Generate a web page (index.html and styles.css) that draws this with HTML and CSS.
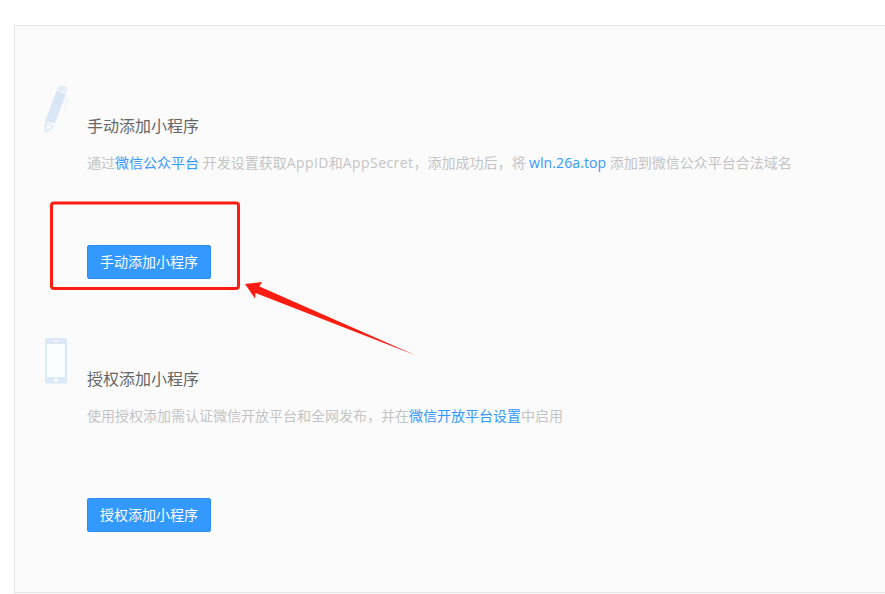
FILE: index.html
```html
<!DOCTYPE html>
<html lang="zh-CN">
<head>
<meta charset="utf-8">
<title>添加小程序</title>
<link rel="stylesheet" href="styles.css">
</head>
<body>
<main class="panel">
  <section class="method method-manual">
    <svg class="method-icon" width="24" height="48" viewBox="0 0 24 48" aria-hidden="true">
      <path d="M13.4 3.4C15 .6 18 -.2 20.4 .8C22.8 1.9 23.4 4.2 22.8 6.4L22.2 8.2L12.9 4.4Z" fill="#e3edf7"/>
      <path d="M12.7 5.2L22 9.2L11 38.3L1 36.7Z" fill="#d9e7f5"/>
      <path d="M23 12L23.8 12.3L20.4 26.6L19.6 26.2Z" fill="#e8eff8"/>
      <path d="M1 37L10.9 41.2L3.2 47.4C2 48 .6 47.4 .6 46.2Z" fill="#dfeaf6"/>
      <path d="M2.4 39.2L7.9 41.5L3 45.3Z" fill="#fbfbfb"/>
    </svg>
    <div class="method-body">
      <h2 class="method-title">手动添加小程序</h2>
      <p class="method-desc">通过<a class="link" href="#">微信公众平台</a> 开发设置获取<span class="latin">AppID</span>和<span class="latin">AppSecret</span>，添加成功后，将 <a class="link latin" href="#">wln.26a.top</a> 添加到微信公众平台合法域名</p>
      <button class="btn" type="button">手动添加小程序</button>
    </div>
  </section>
  <section class="method method-auth">
    <svg class="method-icon" width="24" height="46" viewBox="0 0 24 46" aria-hidden="true">
      <rect x="1" y="0" width="22" height="45.500" rx="2.500" fill="#dbe8f5"/>
      <rect x="3" y="6" width="18" height="33" fill="#fbfcfe"/>
      <rect x="9" y="2.500" width="6" height="1.500" rx=".75" fill="#fbfcfe"/>
      <circle cx="12" cy="42.300" r="1.700" fill="#fbfcfe"/>
    </svg>
    <div class="method-body">
      <h2 class="method-title">授权添加小程序</h2>
      <p class="method-desc">使用授权添加需认证微信开放平台和全网发布，并在<a class="link" href="#">微信开放平台设置</a>中启用</p>
      <button class="btn" type="button">授权添加小程序</button>
    </div>
  </section>
</main>
<svg class="annotation" width="885" height="594" viewBox="0 0 885 594" aria-hidden="true">
  <rect x="51.500" y="203" width="187" height="85.500" rx="2.500" fill="none" stroke="#fb1d12" stroke-width="3"/>
  <path d="M245 284L262 282L259.500 286.500L416 355.500L255.500 293L255 298.500Z" fill="#fb1d12"/>
</svg>
</body>
</html>
```
FILE: styles.css
```css
html, body {
  margin: 0;
  padding: 0;
  background: #fff;
  overflow: hidden;
}
body {
  width: 885px;
  height: 594px;
  padding-top: 25px;
  box-sizing: border-box;
  font-family: "Open Sans", "Noto Sans CJK SC", sans-serif;
}
.panel {
  margin-left: 14px;
  width: 900px;
  height: 568px;
  box-sizing: border-box;
  border: 1px solid #e6e6e6;
  background: #fbfbfb;
  padding: 59px 0 0 29px;
}
.method {
  display: flex;
  align-items: flex-start;
}
.method-manual { height: 253px; }
.method-auth { height: 254px; }
.method-icon {
  flex: none;
  margin-right: 19px;
}
.method-body { padding-top: 29px; }
.method-title {
  margin: 0;
  font-size: 16px;
  font-weight: 400;
  line-height: 24px;
  color: #666;
}
.method-desc {
  margin: 13px 0 0;
  font-size: 14px;
  line-height: 24px;
  color: #c4c4c4;
  white-space: nowrap;
}
.latin {
  letter-spacing: 0.42px;
}
.link {
  color: #3399ff;
  text-decoration: none;
}
.link.latin {
  letter-spacing: 0.1px;
}
.btn {
  display: block;
  margin-top: 70px;
  width: 124px;
  height: 34px;
  padding: 0;
  border: 1px solid #2a90f5;
  border-radius: 2px;
  background: #3399ff;
  color: #fff;
  font: inherit;
  font-size: 14px;
  line-height: 32px;
  text-align: center;
}
.annotation {
  position: absolute;
  left: 0;
  top: 0;
  pointer-events: none;
}
```
